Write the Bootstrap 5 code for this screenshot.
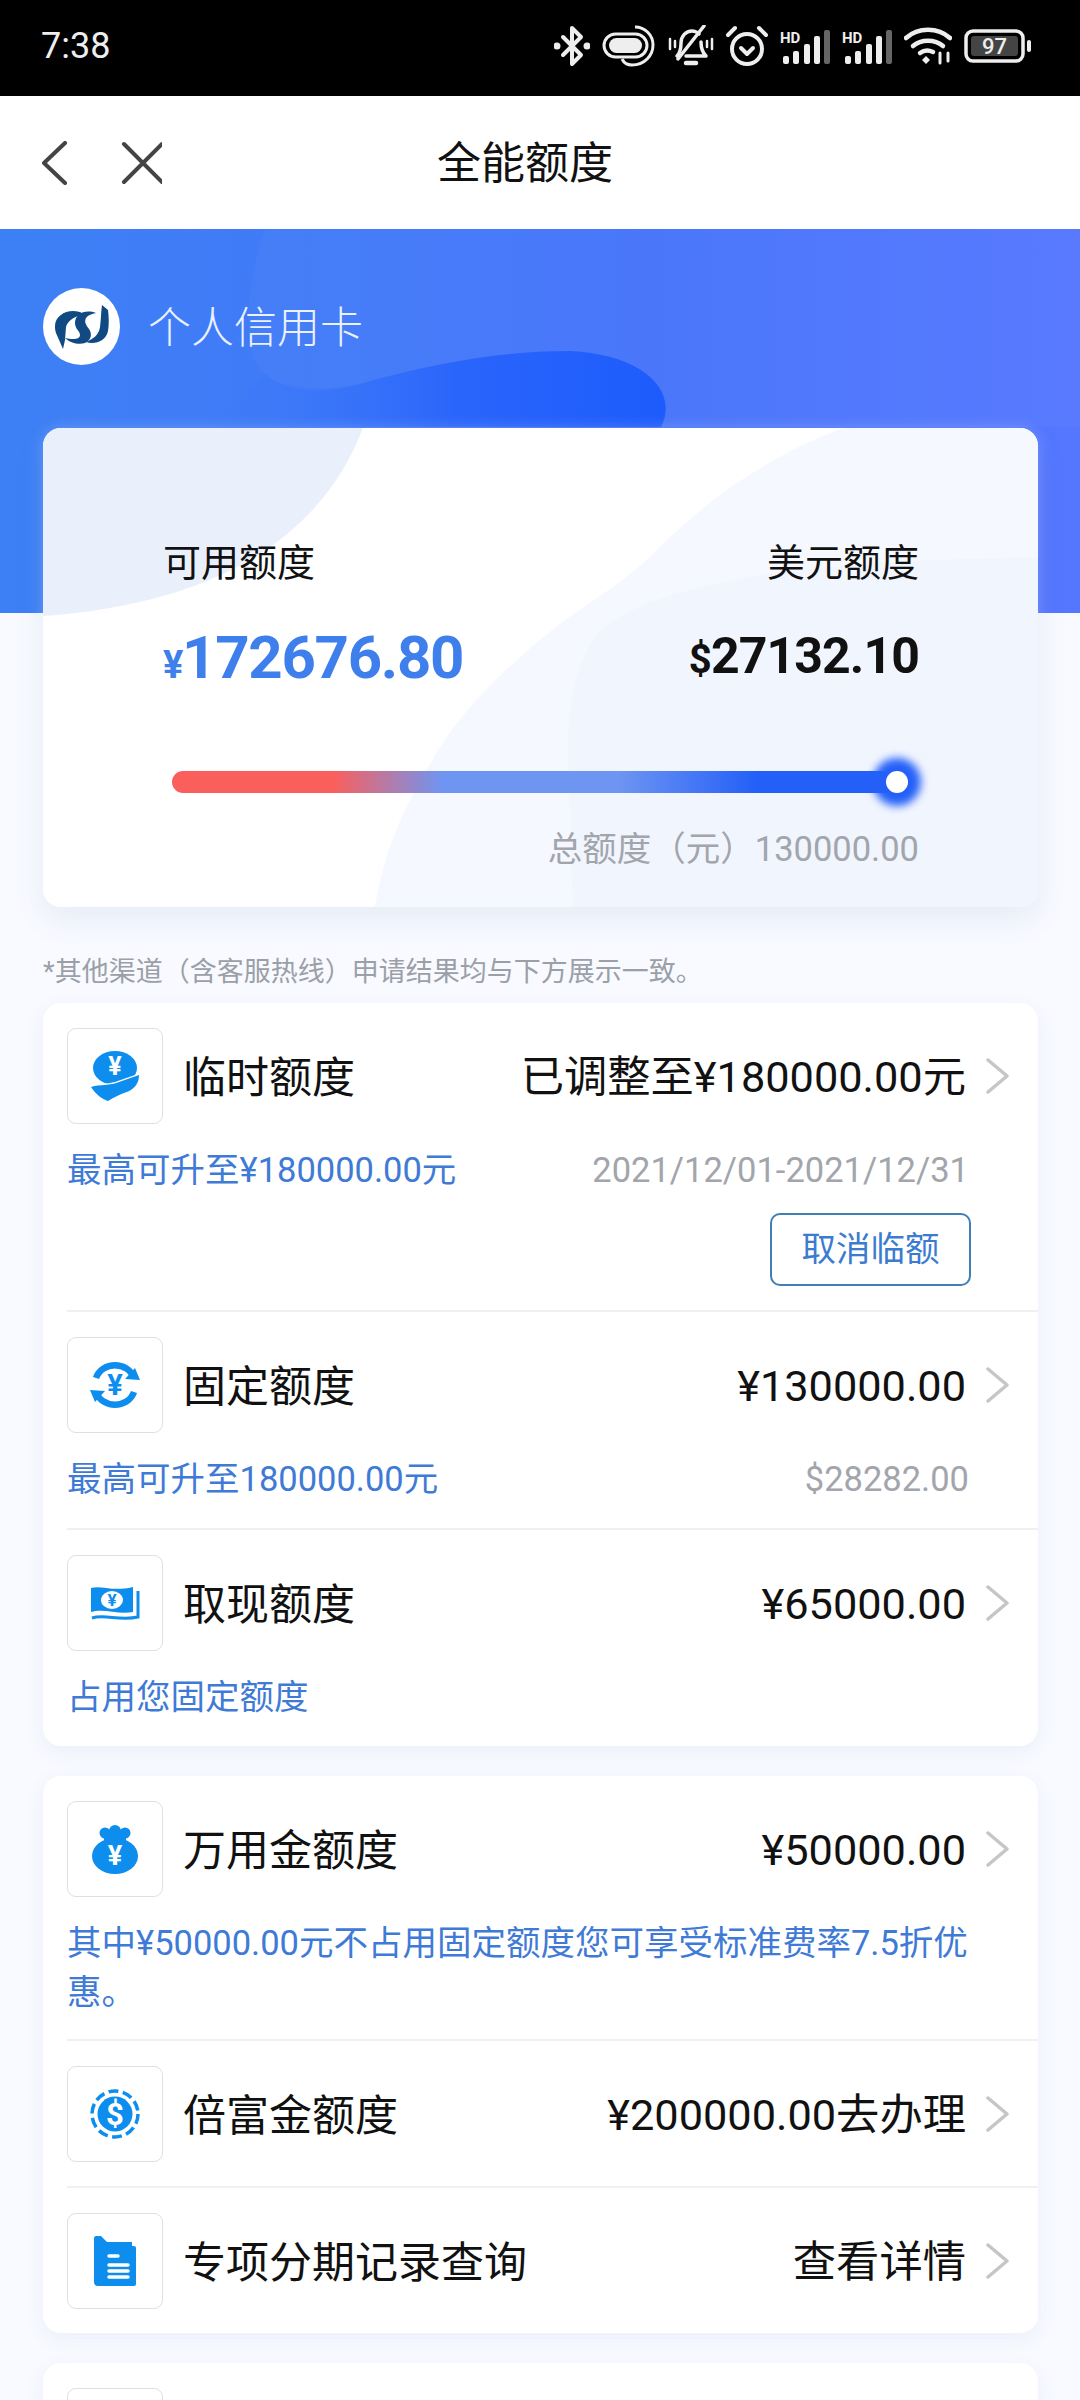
<!DOCTYPE html>
<html lang="zh-CN">

<head>
    <meta charset="UTF-8">
    <meta name="viewport" content="width=device-width, initial-scale=1.0">
    <title>全能额度</title>

    <link rel="stylesheet" href="https://cdn.jsdelivr.net/npm/bootstrap@5.3.0/dist/css/bootstrap.min.css">

    <style>
        html, body {
            height: 2400px;
            overflow: hidden;
        }

        body {
            font-family: Roboto, "Noto Sans CJK SC", sans-serif;
            background-color: #f8faff;
            color: #111;
        }

        .status-bar {
            height: 96px;
            background: #000;
            color: #eee;
            padding: 0 48px 4px 41px;
        }

        .status-time {
            font-size: 36px;
        }

        .status-icons {
            gap: 12px;
        }

        .app-head {
            height: 133px;
            background: #fff;
            padding-left: 42px;
        }

        .head-title {
            font-size: 44px;
            margin-left: 275px;
            padding-top: 2px;
        }

        .hero {
            height: 384px;
            overflow: hidden;
            background: linear-gradient(90deg, #3d80f5, #4674fa 60%, #5577ff);
        }

        .hero-deco {
            left: 0;
            top: 0;
        }

        .hero-title {
            padding: 59px 0 0 43px;
            gap: 28px;
            color: #eaf1ff;
            font-size: 43px;
            font-weight: 300;
        }

        .hero-title span {
            padding-top: 3px;
        }

        .logo-disc {
            width: 77px;
            height: 77px;
            background: #fff;
        }

        .page-body {
            padding: 0 42px 0 43px;
        }

        .limit-card {
            height: 479px;
            margin-top: -185px;
            border: 0;
            border-radius: 18px;
            overflow: hidden;
            box-shadow: 0 0 16px rgba(255, 255, 255, .22), 0 12px 30px rgba(70, 100, 170, .1);
        }

        .limit-deco {
            left: 0;
            top: 0;
        }

        .limit-inner {
            padding: 110px 119px 0 120px;
        }

        .limit-label {
            font-size: 38px;
            line-height: 50px;
        }

        .amount-cny {
            font-size: 60px;
            font-weight: 700;
            line-height: 76px;
            letter-spacing: -1.3px;
            color: #3f7fec;
            margin-top: 32px;
        }

        .amount-usd {
            font-size: 50px;
            font-weight: 700;
            line-height: 76px;
            letter-spacing: -.9px;
            margin-top: 30px;
        }

        .amount-sign {
            font-size: 40px;
        }

        .amount-cny .amount-sign {
            font-size: 38px;
        }

        .usage-bar {
            height: 22px;
            margin: 68px 0 0 9px;
            width: 730px;
            border-radius: 11px;
            background: linear-gradient(90deg, #fb5f5b 0, #fb5f5b 22%, #6f95f2 37%, #6f95f2 61%, #2460f8 80%);
        }

        .usage-thumb {
            right: -6px;
            top: 50%;
            width: 22px;
            height: 22px;
            transform: translateY(-50%);
            background: #fff;
            box-shadow: 0 0 8px 13px #2460f8;
        }

        .limit-total {
            font-size: 34.5px;
            line-height: 46px;
            color: #a2a5ac;
            margin-top: 33px;
        }

        .note-line {
            font-size: 27px;
            line-height: 36px;
            color: #9b9fa7;
            margin: 47px 0 13px;
        }

        .group-card {
            border: 0;
            border-radius: 18px;
            box-shadow: 0 6px 20px rgba(70, 100, 170, .07);
            margin-bottom: 30px;
            padding-left: 24px;
        }

        .item-block {
            padding: 25px 0 24px;
            border-bottom: 2px solid #eff0f2;
        }

        .item-block:last-child {
            border-bottom: 0;
        }

        .item-main {
            padding-right: 28px;
        }

        .icon-tile {
            width: 96px;
            height: 96px;
            border: 1px solid #dfdfe2;
            border-radius: 9px;
            margin-right: 20px;
            flex: none;
        }

        .item-name {
            font-size: 43px;
            padding-top: 4px;
        }

        .item-value {
            font-size: 43.3px;
            margin-right: 19px;
            padding-top: 4px;
        }

        .item-note {
            font-size: 34.5px;
            line-height: 49px;
            color: #3f7bd6;
            margin-top: 22px;
            padding-right: 69px;
        }

        .item-note-wrap {
            margin-bottom: -2px;
        }

        .item-note-side {
            font-size: 34.5px;
            color: #a2a5ac;
        }

        .btn-cancel {
            width: 201px;
            height: 73px;
            font-size: 34.5px;
            line-height: 1;
            color: #3b7bd0;
            border: 2px solid #3f7fb5;
            border-radius: 10px;
            margin: 18px 67px 0 0;
            background: transparent;
        }
    </style>
</head>

<body>

    <div class="status-bar d-flex align-items-center justify-content-between">
        <span class="status-time">7:38</span>
        <div class="status-icons d-flex align-items-center">
            <svg width="36" height="42" viewBox="0 0 36 42" fill="none" stroke="#eee" stroke-width="4" stroke-linecap="round" stroke-linejoin="round">
                <path d="M9 12 27 30 18 39V3l9 9L9 30"/>
                <circle cx="3" cy="21" r="1.5" fill="#eee"/>
                <circle cx="33" cy="21" r="1.5" fill="#eee"/>
            </svg>
            <svg width="54" height="42" viewBox="0 0 54 42" fill="none" stroke="#eee" stroke-width="3">
                <rect x="2" y="9" width="43" height="23" rx="11.5"/>
                <rect x="7" y="13" width="33" height="15" rx="7.5" fill="#eee" stroke="none"/>
                <path d="M33 2c10 0 18 8 18 18s-8 20-21 20c-5 0-8-2-10-6"/>
            </svg>
            <svg width="46" height="42" viewBox="0 0 46 42" fill="none" stroke="#eee" stroke-width="3.5" stroke-linecap="round" stroke-linejoin="round">
                <path d="M9 31c3-3 4-7 4-13 0-7 5-12 11-12 3 0 5 1 7 3M33 17c0 6 1 10 5 14H18"/>
                <path d="M18 38h10" stroke-width="4.5"/>
                <path d="M10 34 36 1"/>
                <path d="M2 14v10M7 16v6M39 16v6M44 14v10" stroke-width="2.5"/>
            </svg>
            <svg width="42" height="44" viewBox="0 0 42 44" fill="none" stroke="#eee" stroke-width="4" stroke-linecap="round" stroke-linejoin="round">
                <circle cx="21" cy="25" r="15"/>
                <path d="M15 24l6 6 6-6"/>
                <path d="M2 11 9 4M40 11l-7-7"/>
            </svg>
            <svg width="50" height="36" viewBox="0 0 50 36">
                <text x="0" y="15" font-family="Roboto, sans-serif" font-size="15" font-weight="700" fill="#eee">HD</text>
                <rect x="3" y="28" width="6" height="8" rx="2" fill="#eee"/>
                <rect x="13" y="23" width="6" height="13" rx="2" fill="#eee"/>
                <rect x="24" y="16" width="6" height="20" rx="2" fill="#eee"/>
                <rect x="34" y="8" width="6" height="28" rx="2" fill="#eee"/>
                <rect x="44" y="2" width="6" height="34" rx="2" fill="#666"/>
            </svg>
            <svg width="50" height="36" viewBox="0 0 50 36">
                <text x="0" y="15" font-family="Roboto, sans-serif" font-size="15" font-weight="700" fill="#eee">HD</text>
                <rect x="3" y="28" width="6" height="8" rx="2" fill="#eee"/>
                <rect x="13" y="23" width="6" height="13" rx="2" fill="#eee"/>
                <rect x="24" y="16" width="6" height="20" rx="2" fill="#eee"/>
                <rect x="34" y="8" width="6" height="28" rx="2" fill="#eee"/>
                <rect x="44" y="2" width="6" height="34" rx="2" fill="#666"/>
            </svg>
            <svg width="48" height="38" viewBox="0 0 48 38" fill="none" stroke="#eee" stroke-width="4.5" stroke-linecap="round">
                <path d="M2 11c12-11 32-11 44 0"/>
                <path d="M9 19c8-7 22-7 30 0"/>
                <path d="M16 26c4-3 9-3 13-1"/>
                <path d="M22 29l4 4-4 4-4-4z" fill="#eee" stroke="none"/>
                <path d="M36 26v10M44 26v8" stroke-width="3"/>
            </svg>
            <svg width="68" height="34" viewBox="0 0 68 34">
                <rect x="2" y="2" width="57" height="30" rx="7" fill="none" stroke="#eee" stroke-width="3.5"/>
                <rect x="7" y="7" width="47" height="20" rx="3" fill="#444"/>
                <rect x="63" y="11" width="4" height="12" rx="2" fill="#eee"/>
                <text x="30.5" y="25" text-anchor="middle" font-family="Roboto, sans-serif" font-size="22" font-weight="500" fill="#eee">97</text>
            </svg>
        </div>
    </div>

    <div class="app-head d-flex align-items-center">
        <svg width="120" height="44" viewBox="0 0 120 44" fill="none" stroke="#444" stroke-width="4" stroke-linecap="round" stroke-linejoin="round">
            <path d="M23 2 2 22l21 20"/>
            <path d="M82 3l38 38M120 3 82 41"/>
        </svg>
        <span class="head-title">全能额度</span>
    </div>

    <div class="hero position-relative">
        <svg class="hero-deco position-absolute" width="1080" height="384" viewBox="0 0 1080 384">
            <defs>
                <linearGradient id="blobFill" x1="0" x2="1" y1="0" y2="0">
                    <stop offset="0" stop-color="#3d7ef7" stop-opacity=".2"/>
                    <stop offset=".55" stop-color="#2a65fb"/>
                    <stop offset="1" stop-color="#1d5cfc"/>
                </linearGradient>
            </defs>
            <path d="M265 0C250 45 244 90 252 125 262 160 310 165 360 155 430 135 500 122 570 122 640 125 680 170 661 198L1080 198V0Z" fill="#fff" fill-opacity=".025"/>
            <path d="M265 145C290 165 320 165 360 155 430 135 500 122 570 122 640 125 680 160 661 198H250L200 200C225 180 245 165 265 145Z" fill="url(#blobFill)"/>
        </svg>
        <div class="hero-title position-relative d-flex align-items-center">
            <div class="logo-disc rounded-circle d-flex align-items-center justify-content-center">
                <svg width="54" height="44" viewBox="0 0 54 44" fill="#114a82">
                    <path d="M8 44 1 28C0 25 0 23 0 21 0 12 9 6 18 6 22 6 26 7 29 9 22 11 13 14 11 22L10 35Z"/>
                    <path d="M41 8C30 4 20 9 20 18 20 24 25 26 25 30 25 34 19 35 10 33 15 38 24 40 30 38 37 35 37 28 34 24 31 20 29 17 31 13 33 10 37 9 41 8Z"/>
                    <path d="M47 0 53 5C54 12 54 20 53 26 51 36 40 40 31 37 38 34 44 30 45 22 46 14 46 7 47 0Z"/>
                </svg>
            </div>
            <span>个人信用卡</span>
        </div>
    </div>

    <div class="page-body position-relative">
        <div class="card limit-card position-relative">
            <svg class="limit-deco position-absolute" width="996" height="479" viewBox="0 0 996 479">
                <path d="M0 0H320C280 105 180 175 0 188Z" fill="#e9f0fc"/>
                <path d="M800 0C720 30 660 75 611 125 580 155 555 168 518 195 460 240 410 290 384 342 355 390 340 430 332 479H996V0Z" fill="#f5f8fe"/>
                <path d="M996 130C800 130 620 150 560 200 530 230 522 290 526 350 528 400 528 440 530 479H996Z" fill="#f1f5fe"/>
            </svg>
            <div class="limit-inner position-relative">
                <div class="d-flex justify-content-between">
                    <div>
                        <div class="limit-label">可用额度</div>
                        <div class="amount-cny"><span class="amount-sign">¥</span>172676.80</div>
                    </div>
                    <div class="text-end">
                        <div class="limit-label">美元额度</div>
                        <div class="amount-usd"><span class="amount-sign">$</span>27132.10</div>
                    </div>
                </div>
                <div class="usage-bar position-relative">
                    <div class="usage-thumb position-absolute rounded-circle"></div>
                </div>
                <div class="limit-total text-end">总额度（元）130000.00</div>
            </div>
        </div>

        <div class="note-line">*其他渠道（含客服热线）申请结果均与下方展示一致。</div>

        <div class="card group-card">
            <div class="item-block">
                <div class="item-main d-flex align-items-center">
                    <div class="icon-tile d-flex align-items-center justify-content-center">
                        <svg width="50" height="50" viewBox="0 0 50 50">
                            <ellipse cx="25" cy="17" rx="22" ry="17" fill="#0d8eee"/>
                            <path d="M1 36C10 33 20 35 29 31L49 24C49 33 44 39 34 42 28 44 23 47 18 50 11 48 5 42 1 36Z" fill="#0d8eee" stroke="#fff" stroke-width="2.5" paint-order="stroke"/>
                            <text x="25" y="24" text-anchor="middle" font-family="Roboto, sans-serif" font-size="25" font-weight="700" fill="#fff">¥</text>
                        </svg>
                    </div>
                    <span class="item-name">临时额度</span>
                    <span class="item-value ms-auto">已调整至¥180000.00元</span>
                    <svg width="25" height="36" viewBox="0 0 25 36" fill="none" stroke="#c6c6c8" stroke-width="3.5" stroke-linecap="round" stroke-linejoin="round"><path d="M3 2 22 18 3 34"/></svg>
                </div>
                <div class="item-note d-flex justify-content-between">
                    <span>最高可升至¥180000.00元</span>
                    <span class="item-note-side">2021/12/01-2021/12/31</span>
                </div>
                <div class="text-end">
                    <button class="btn btn-cancel p-0">取消临额</button>
                </div>
            </div>
            <div class="item-block">
                <div class="item-main d-flex align-items-center">
                    <div class="icon-tile d-flex align-items-center justify-content-center">
                        <svg width="50" height="48" viewBox="0 0 50 48" fill="none" stroke="#0d8eee" stroke-width="6.5">
                            <path d="M6 17C12 0 38 0 44 17"/>
                            <path d="M44 31C38 48 12 48 6 31"/>
                            <path d="M35 18 50 19 45 7Z" fill="#0d8eee" stroke="none"/>
                            <path d="M15 30 0 29 5 41Z" fill="#0d8eee" stroke="none"/>
                            <text x="25" y="34" text-anchor="middle" font-family="Roboto, sans-serif" font-size="29" font-weight="700" fill="#0d8eee" stroke="none">¥</text>
                        </svg>
                    </div>
                    <span class="item-name">固定额度</span>
                    <span class="item-value ms-auto">¥130000.00</span>
                    <svg width="25" height="36" viewBox="0 0 25 36" fill="none" stroke="#c6c6c8" stroke-width="3.5" stroke-linecap="round" stroke-linejoin="round"><path d="M3 2 22 18 3 34"/></svg>
                </div>
                <div class="item-note d-flex justify-content-between">
                    <span>最高可升至180000.00元</span>
                    <span class="item-note-side">$28282.00</span>
                </div>
            </div>
            <div class="item-block">
                <div class="item-main d-flex align-items-center">
                    <div class="icon-tile d-flex align-items-center justify-content-center">
                        <svg width="50" height="36" viewBox="0 0 50 36">
                            <path d="M1 3C12 0 22 7 43 2V27C28 30 14 23 1 27Z" fill="#0d8eee"/>
                            <path d="M2 33C14 29 30 36 48 32V6" fill="none" stroke="#0d8eee" stroke-width="3"/>
                            <ellipse cx="22" cy="15" rx="11" ry="9" fill="#fff"/>
                            <text x="22" y="21" text-anchor="middle" font-family="Roboto, sans-serif" font-size="17" font-weight="700" fill="#0d8eee">¥</text>
                        </svg>
                    </div>
                    <span class="item-name">取现额度</span>
                    <span class="item-value ms-auto">¥65000.00</span>
                    <svg width="25" height="36" viewBox="0 0 25 36" fill="none" stroke="#c6c6c8" stroke-width="3.5" stroke-linecap="round" stroke-linejoin="round"><path d="M3 2 22 18 3 34"/></svg>
                </div>
                <div class="item-note">占用您固定额度</div>
            </div>
        </div>

        <div class="card group-card">
            <div class="item-block">
                <div class="item-main d-flex align-items-center">
                    <div class="icon-tile d-flex align-items-center justify-content-center">
                        <svg width="46" height="49" viewBox="0 0 46 49">
                            <ellipse cx="23" cy="31" rx="23" ry="18" fill="#0d8eee"/>
                            <circle cx="13" cy="8" r="5.5" fill="#0d8eee"/>
                            <circle cx="23" cy="6" r="6" fill="#0d8eee"/>
                            <circle cx="33" cy="8" r="5.5" fill="#0d8eee"/>
                            <rect x="12" y="8" width="22" height="9" fill="#0d8eee"/>
                            <text x="23" y="40" text-anchor="middle" font-family="Roboto, sans-serif" font-size="27" font-weight="700" fill="#fff">¥</text>
                        </svg>
                    </div>
                    <span class="item-name">万用金额度</span>
                    <span class="item-value ms-auto">¥50000.00</span>
                    <svg width="25" height="36" viewBox="0 0 25 36" fill="none" stroke="#c6c6c8" stroke-width="3.5" stroke-linecap="round" stroke-linejoin="round"><path d="M3 2 22 18 3 34"/></svg>
                </div>
                <div class="item-note item-note-wrap">其中¥50000.00元不占用固定额度您可享受标准费率7.5折优惠。</div>
            </div>
            <div class="item-block">
                <div class="item-main d-flex align-items-center">
                    <div class="icon-tile d-flex align-items-center justify-content-center">
                        <svg width="50" height="50" viewBox="0 0 50 50">
                            <circle cx="25" cy="25" r="17.5" fill="#0d8eee"/>
                            <circle cx="25" cy="25" r="23" fill="none" stroke="#0d8eee" stroke-width="3.5" stroke-dasharray="10 4.45"/>
                            <text x="25" y="36" text-anchor="middle" font-family="Roboto, sans-serif" font-size="31" font-weight="700" fill="#fff">$</text>
                        </svg>
                    </div>
                    <span class="item-name">倍富金额度</span>
                    <span class="item-value ms-auto">¥200000.00去办理</span>
                    <svg width="25" height="36" viewBox="0 0 25 36" fill="none" stroke="#c6c6c8" stroke-width="3.5" stroke-linecap="round" stroke-linejoin="round"><path d="M3 2 22 18 3 34"/></svg>
                </div>
            </div>
            <div class="item-block">
                <div class="item-main d-flex align-items-center">
                    <div class="icon-tile d-flex align-items-center justify-content-center">
                        <svg width="42" height="50" viewBox="0 0 42 50">
                            <path d="M2 0H7L13 6H38V10H12V46H40L38 50H4C1 50 0 48 0 46V2C0 1 1 0 2 0Z" fill="#0d8eee"/>
                            <rect x="9" y="10" width="33" height="40" rx="2" fill="#0d8eee"/>
                            <path d="M15 20H24M15 29H34M15 35H34M15 41H34" stroke="#fff" stroke-width="3.5" stroke-linecap="round"/>
                        </svg>
                    </div>
                    <span class="item-name">专项分期记录查询</span>
                    <span class="item-value ms-auto">查看详情</span>
                    <svg width="25" height="36" viewBox="0 0 25 36" fill="none" stroke="#c6c6c8" stroke-width="3.5" stroke-linecap="round" stroke-linejoin="round"><path d="M3 2 22 18 3 34"/></svg>
                </div>
            </div>
        </div>

        <div class="card group-card">
            <div class="item-block">
                <div class="icon-tile"></div>
            </div>
        </div>
    </div>

    <script src="https://cdn.jsdelivr.net/npm/bootstrap@5.3.0/dist/js/bootstrap.bundle.min.js"></script>
</body>

</html>
